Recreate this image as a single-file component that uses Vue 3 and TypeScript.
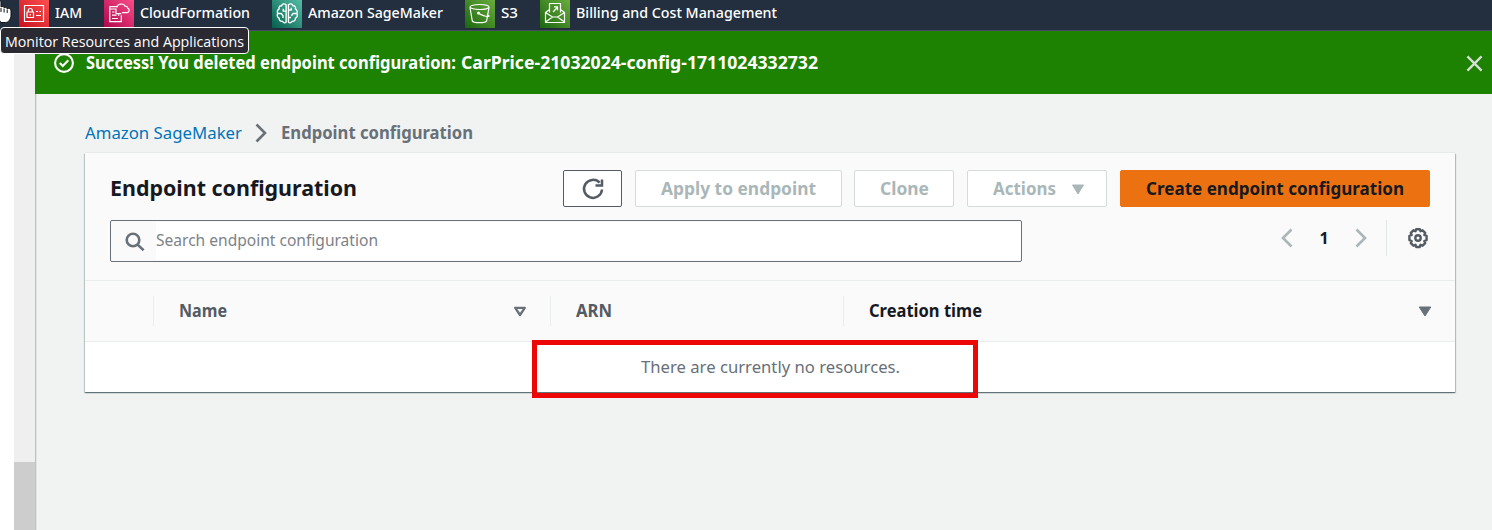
<script setup lang="ts">
interface NavItem {
  id: string
  label: string
  width: number
}

const services: NavItem[] = [
  { id: 'iam', label: 'IAM', width: 27 },
  { id: 'cfn', label: 'CloudFormation', width: 110 },
  { id: 'sage', label: 'Amazon SageMaker', width: 135 },
  { id: 's3', label: 'S3', width: 17 },
  { id: 'bill', label: 'Billing and Cost Management', width: 201 },
]

// Condenses or widens a line of text so that it fills the given width.
const vFit = {
  mounted(el: HTMLElement, binding: { value: number }) {
    const natural = el.getBoundingClientRect().width
    el.style.width = `${binding.value}px`
    el.style.transform = `scaleX(${binding.value / natural})`
  },
}
</script>

<template>
  <div class="page">
    <nav class="topbar">
      <div v-for="s in services" :key="s.id" class="service" :class="s.id">
        <svg class="tile" viewBox="0 0 30 30">
          <defs>
            <linearGradient :id="'g-' + s.id" x1="0" y1="1" x2="1" y2="0">
              <stop class="from" offset="0" />
              <stop class="to" offset="1" />
            </linearGradient>
          </defs>
          <rect width="30" height="30" :fill="`url(#g-${s.id})`" />
          <g v-if="s.id === 'iam'" class="ink">
            <path d="M5.500 8.500h19v16h-19z M8 15h6.500v5.500H8z M9.300 15v-1.500a2 2 0 0 1 4 0v1.500 M11.250 17v1.500 M17 14.500h2 M20.500 14.500h1.500 M17 18.500h5" />
          </g>
          <g v-else-if="s.id === 'cfn'" class="ink" transform="translate(0 1.500)">
            <path d="M13.500 8.200H5.800v15h11.500v-6.500 M12 15.200v-5.200 M5.800 10.500H12 M12 15.200h5.300 M8 13.500h2.500 M8 16.700h4.500 M14 16.700h1.300 M8 20h6" />
            <path d="M13 8.800c.3-3.800 7-4.600 8.300-.8 1.500-.6 2.300.3 2.300 1.700 2.100.6 2.300 3.900-.4 4.500h-5.200" />
          </g>
          <g v-else-if="s.id === 'sage'" class="ink" transform="translate(-2.200 -1.800) scale(1.150)">
            <path d="M14.200 7.500c-1.500-1.500-3.500-.8-3.900.8-2-.1-2.700 1.500-2.100 2.800-1.700.8-2 2.600-1.300 3.800-.9 1.700-.4 3.500 1.200 4.200 0 2 1.400 3 2.800 2.700 1 1.700 2.500 1.700 3.300.7zM16.200 7.500c1.500-1.500 3.500-.8 3.900.8 2-.1 2.700 1.500 2.100 2.800 1.700.8 2 2.600 1.300 3.800.9 1.700.4 3.500-1.200 4.200 0 2-1.400 3-2.800 2.700-1 1.700-2.500 1.700-3.300.7z" />
            <path d="M14.200 13h-2.500v-2 M7 15h3l1.500 2v2 M16.200 12h2.500v-2 M23.300 15h-3l-1.500 2 M16.200 18.500h2.200" />
          </g>
          <g v-else-if="s.id === 's3'" class="ink" transform="translate(0 .5)">
            <ellipse cx="14.500" cy="8.500" rx="9.500" ry="2.500" />
            <path d="M5 9l2.300 13.500c1 2.300 13.300 2.300 14.300 0L24 9 M13.500 14.800c3 1.800 6.500 3.300 9.500 3.200 2 0 1-1.300-1-2.300" />
            <circle cx="13.500" cy="14.500" r=".9" />
          </g>
          <g v-else class="ink">
            <path d="M9.500 14.500V5.500h11v9 M9.500 11.500l-4 3v10h19v-10l-4-3 M5.500 14.500l7 4.500h5l7-4.500 M5.500 24l7-5 M24.500 24l-7-5 M13 14l4.300-4.500 M14 8.800h3.500v3.500" />
          </g>
        </svg>
        <span v-fit="s.width" class="t nav-label">{{ s.label }}</span>
      </div>
    </nav>

    <div class="body">
      <aside class="side">
        <div class="scrollbar"><div class="thumb"></div></div>
      </aside>

      <main class="main">
        <div class="flash">
          <svg class="ok" viewBox="0 0 20 20"><circle cx="10" cy="10" r="8.900" /><path d="M5.800 10l3 3 5.500-5.700" /></svg>
          <span v-fit="370" class="t flash-text">Success! You deleted endpoint configuration:</span>
          <span v-fit="357" class="t flash-text config-name">CarPrice-21032024-config-1711024332732</span>
          <svg class="close" viewBox="0 0 18 18"><path d="M1.500 1.500l15 15M16.500 1.500l-15 15" /></svg>
        </div>

        <div class="crumbs">
          <span v-fit="157" class="t link">Amazon SageMaker</span>
          <svg class="crumb-sep" viewBox="0 0 12 20"><path d="M1.500 1.500l8.500 8.500-8.500 8.500" /></svg>
          <span v-fit="192" class="t current">Endpoint configuration</span>
        </div>

        <section class="card">
          <header class="card-head">
            <div class="title-row">
              <h1 class="title"><span v-fit="247" class="t">Endpoint configuration</span></h1>
              <button class="btn refresh">
                <svg viewBox="0 0 22 22"><path d="M17.600 4.700A9 9 0 1 0 20 11.500M20 1.500v6h-6.500" /></svg>
              </button>
              <button class="btn off apply"><span v-fit="155" class="t">Apply to endpoint</span></button>
              <button class="btn off clone"><span v-fit="49" class="t">Clone</span></button>
              <button class="btn off actions">
                <span v-fit="63" class="t">Actions</span>
                <svg class="caret" viewBox="0 0 14 11"><path d="M1.500 1h11L7 10z" /></svg>
              </button>
              <button class="btn primary"><span v-fit="258" class="t">Create endpoint configuration</span></button>
            </div>
            <div class="filter-row">
              <div class="search">
                <svg viewBox="0 0 20 20"><circle cx="8" cy="8" r="6.300" /><path d="M12.600 12.600l6 5.600" /></svg>
                <div class="field"><span v-fit="222" class="t">Search endpoint configuration</span></div>
              </div>
              <div class="pager">
                <svg class="chev" viewBox="0 0 12 20"><path d="M10.500 1.500L2 10l8.500 8.500" /></svg>
                <span class="page-no">1</span>
                <svg class="chev" viewBox="0 0 12 20"><path d="M1.500 1.500L10 10l-8.500 8.500" /></svg>
                <div class="gear-box">
                  <svg class="gear" viewBox="0 0 20 20">
                    <path d="M8.200 1.200h3.600l.7 2 2.100-.9 2.600 2.600-.9 2.100 2.300.9v4.200l-2.300.9.900 2.100-2.600 2.600-2.100-.9-.7 2.200H8.200l-.7-2.200-2.100.9-2.600-2.600.9-2.100-2.300-.9V7.900l2.300-.9-.9-2.100 2.600-2.600 2.100.9z" />
                    <circle cx="10" cy="10" r="2.700" />
                  </svg>
                </div>
              </div>
            </div>
          </header>

          <div class="thead">
            <div class="th check"></div>
            <div class="th name">
              <span v-fit="48" class="t">Name</span>
              <svg class="sort" viewBox="0 0 14 11"><path class="hollow" d="M2.200 1.800h9.600L7 9z" /></svg>
            </div>
            <div class="th arn"><span v-fit="36" class="t">ARN</span></div>
            <div class="th created">
              <span v-fit="113" class="t">Creation time</span>
              <svg class="sort" viewBox="0 0 14 11"><path d="M1.200 1h11.600L7 10z" /></svg>
            </div>
          </div>
          <div class="empty">
            <span v-fit="259" class="t">There are currently no resources.</span>
            <div class="highlight"></div>
          </div>
        </section>
      </main>
    </div>

    <div class="tooltip"><span v-fit="239" class="t">Monitor Resources and Applications</span></div>
    <svg class="cursor" viewBox="0 0 14 24">
      <path d="M-3 11V2c0-2 4-2 4 0v5c1-1 2.800-.6 3 .6 1.200-.8 2.800-.2 3 1 1.500-.7 4 0 4 2.300V15c0 4-2.500 7.500-5.500 7.500h-4.500L-3 17z" />
      <path class="knuckle" d="M1 8v4M4.100 8.500v4M7.200 9.500v3.500" />
    </svg>
  </div>
</template>

<style>
body { margin: 0; overflow: hidden; }
</style>

<style scoped>
.page {
  position: relative;
  width: 1492px;
  height: 530px;
  overflow: hidden;
  display: flex;
  flex-direction: column;
  background: #fff;
  font-family: "Noto Sans", "Open Sans", sans-serif;
}
.t { display: inline-block; white-space: nowrap; transform-origin: 0 50%; flex: none; }
svg { display: block; flex: none; fill: none; overflow: visible; }

.topbar {
  height: 31px;
  box-sizing: border-box;
  flex: none;
  display: flex;
  align-items: flex-start;
  gap: 22px;
  padding-left: 19px;
  background: #232f3e;
  border-bottom: 1px solid #4a4a68;
}
.service { display: flex; height: 28px; align-items: center; gap: 6px; }
.tile { width: 30px; height: 30px; margin-top: -2px; }
.iam .tile, .cfn .tile { margin-top: -4px; }
.nav-label { font-size: 14.5px; line-height: 20px; color: #fff; margin-top: -4px; font-weight: 500; }
.ink { stroke: #fff; stroke-width: 1.2; stroke-linejoin: round; }
.iam .from { stop-color: #c8101d; } .iam .to { stop-color: #ff5252; }
.cfn .from { stop-color: #b0084d; } .cfn .to { stop-color: #ff4f8b; }
.sage .from { stop-color: #055f4e; } .sage .to { stop-color: #56c0a7; }
.s3 .from, .bill .from { stop-color: #1b660f; }
.s3 .to, .bill .to { stop-color: #6cae3e; }

.body { flex: 1; display: flex; }
.side { width: 35px; display: flex; justify-content: flex-end; background: #fff; }
.scrollbar { width: 21px; background: #efefef; display: flex; flex-direction: column; justify-content: flex-end; }
.thumb { height: 68px; background: #cdcdcd; }
.main { flex: 1; min-width: 0; background: #f1f3f3; box-shadow: inset 1px 0 #bcc3c3, inset 2px 0 #e0e4e4; }

.flash { height: 63px; display: flex; align-items: center; background: #1d8102; padding: 0 9px 0 19px; }
.ok { width: 20px; height: 20px; margin-right: 12px; stroke: #fff; stroke-width: 2.1; }
.flash-text { font-size: 17.5px; font-weight: 700; color: #fff; line-height: 26px; margin-top: -1px; }
.config-name { margin-left: 5px; }
.close { width: 17px; height: 17px; margin-left: auto; margin-top: 2px; stroke: #d9e0d9; stroke-width: 2.4; }

.crumbs { height: 58px; display: flex; align-items: center; padding: 20px 0 0 50px; box-sizing: border-box; line-height: 26px; font-size: 17px; }
.link { color: #0073bb; }
.crumb-sep { width: 12px; height: 20px; margin: 0 14px 0 13px; stroke: #687078; stroke-width: 2.6; }
.current { color: #687078; font-weight: 700; }

.card { width: 1370px; margin-left: 50px; background: #fff; box-shadow: 0 -1px 0 #e7ebeb, 0 1px 1px 0 rgba(0, 28, 36, .4), 1px 1px 1px 0 rgba(0, 28, 36, .2), -1px 1px 1px 0 rgba(0, 28, 36, .16); margin-top: 1px; }
.card-head { height: 128px; box-sizing: border-box; background: #fafafa; border-bottom: 1px solid #eaeded; padding: 17px 25px 0; }
.title-row { display: flex; height: 37px; align-items: center; }
.title { margin: -3px auto 0 0; font-size: 22px; font-weight: 700; line-height: 30px; color: #16191f; }
.title .t { display: block; width: max-content; }
.btn {
  height: 37px; box-sizing: border-box; padding: 0; display: flex; align-items: center; justify-content: center;
  border: 1px solid #545b64; border-radius: 2px; background: #fff;
  font: 700 17.5px/26px "Noto Sans", "Open Sans", sans-serif; color: #16191f;
}
.btn .t { margin-top: -2px; }
.off { border-color: #d5dbdb; color: #aab7b8; }
.refresh { width: 59px; }
.refresh svg { width: 22px; height: 22px; stroke: #545b64; stroke-width: 2.5; }
.apply { width: 207px; margin-left: 13px; }
.clone { width: 100px; margin-left: 12px; }
.actions { width: 140px; margin-left: 13px; gap: 15px; padding-left: 4px; }
.caret { width: 14px; height: 11px; margin-top: 1px; }
.caret path { fill: #aab7b8; stroke: #aab7b8; stroke-width: 1; stroke-linejoin: round; }
.actions .t { margin-left: -1px; }
.primary { width: 310px; margin-left: 13px; background: #ec7211; border-color: #ec7211; }

.filter-row { display: flex; justify-content: space-between; margin-top: 13px; }
.search { width: 912px; height: 42px; box-sizing: border-box; border: 1px solid #687078; border-radius: 2px; display: flex; align-items: center; padding-left: 14px; }
.search svg { width: 20px; height: 20px; margin: 1px 11px 0 0; stroke: #687078; stroke-width: 2.6; }
.field { flex: 1; height: 38px; background: #fff; font-size: 15.5px; line-height: 37px; color: #7d8288; }
.pager { display: flex; align-items: center; height: 35px; }
.chev { width: 12px; height: 20px; stroke: #aab7b8; stroke-width: 2.6; }
.page-no { width: 62px; text-align: center; font-size: 16px; line-height: 22px; font-weight: 700; color: #16191f; }
.gear-box { margin-left: 19px; border-left: 1px solid #e3e7e7; height: 36px; display: flex; align-items: center; padding: 0 2px 0 21px; }
.gear { width: 20px; height: 20px; stroke: #545b64; stroke-width: 2.4; stroke-linejoin: round; }

.thead { height: 61px; box-sizing: border-box; background: #fafafa; border-bottom: 1px solid #eaeded; display: flex; align-items: center; }
.th { height: 30px; box-sizing: border-box; display: flex; align-items: center; font-size: 17px; line-height: 24px; font-weight: 700; color: #545b64; }
.th + .th { border-left: 1px solid #eaeded; padding-left: 25px; }
.check { width: 68px; }
.name { width: 397px; }
.arn { width: 293px; }
.created { flex: 1; color: #16191f; }
.sort { width: 14px; height: 11px; margin-left: auto; margin-right: 23px; }
.sort path { fill: #687078; stroke: #687078; stroke-width: 1; stroke-linejoin: round; }
.sort .hollow { fill: none; stroke-width: 2.3; }

.empty { position: relative; height: 50px; text-align: center; font-size: 17px; line-height: 50px; color: #687078; }
.highlight { position: absolute; left: 447px; top: -2px; width: 446px; height: 58px; box-sizing: border-box; border: 5px solid #ec0606; }

.tooltip {
  position: absolute; left: 0; top: 27px; width: 249px; height: 27px; box-sizing: border-box;
  border: 1px solid #fff; border-radius: 4px; background: #2b2a33; color: #fff;
  padding-left: 4px; font: 400 15px/27px "Open Sans", "Noto Sans", sans-serif;
}
.cursor { position: absolute; left: 0; top: 0; width: 14px; height: 24px; overflow: hidden; fill: #fff; stroke: #111; stroke-width: 1; }
.knuckle { fill: none; }
</style>
